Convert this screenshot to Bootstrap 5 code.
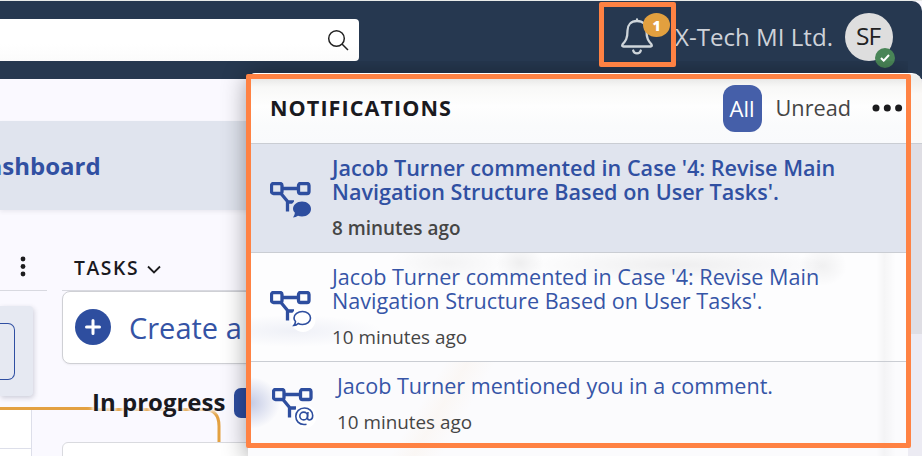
<!DOCTYPE html>
<html lang="en">
<head>
<meta charset="utf-8">
<meta name="viewport" content="width=device-width, initial-scale=1">
<title>Notifications</title>
<link href="https://cdn.jsdelivr.net/npm/bootstrap@5.3.0/dist/css/bootstrap.min.css" rel="stylesheet">
<style>
  body { font-family: "Open Sans", "Noto Sans", sans-serif; background: #faf9ff; color: #1a1a1f; height: 456px; white-space: nowrap; }
  svg { display: block; flex: none; }
  .app { height: 456px; border-top: 1px solid #e9ebe9; }
  .topbar { height: 78px; background: #263850; border-top-right-radius: 10px; padding: 0 29px 0 0; }
  .searchbox { width: 359px; height: 42px; background: linear-gradient(#fff 60%, #fbfbfb); border-radius: 0 4px 4px 0; padding: 0 10px; margin-top: -1px; }
  .company { font-size: 24.1px; color: #ced2d9; line-height: 34px; margin: -7px 12px 0 18px; }
  .bell { width: 38px; height: 48px; margin-top: -12px; }
  .count { left: 24px; top: 3px; width: 27px; height: 24px; background: #e2a03f; font-size: 14px; font-weight: 800; }
  .avatar-disc { width: 48px; height: 48px; background: #dedede; color: #222; font-size: 24.5px; letter-spacing: -1px; margin-top: -6px; padding: 0 2px 1px 0; }
  .online { left: 30px; top: 29px; width: 20px; height: 20px; background: #498557; }
  .band { height: 89px; margin-top: 42px; background: #e0e4ee; box-shadow: 0 2px 4px rgba(60,60,80,.08); }
  .band-title { font-size: 24px; font-weight: 700; color: #3150a2; margin-left: -30px; }
  .side { width: 47px; }
  .side-head { height: 81px; border-bottom: 1px solid #d8d9e0; padding: 46px 18px 0 0; }
  .side-card { width: 33px; height: 90px; margin-top: 15px; background: #e6e9f2; border-radius: 0 4px 4px 0; box-shadow: 1px 2px 5px rgba(50,55,80,.22); }
  .side-inner { width: 15px; height: 57px; border: 1px solid #2f4fa2; border-left: 0; border-radius: 0 7px 7px 0; }
  .orange-line { height: 3px; width: 96px; background: #e3a141; margin-top: 11px; }
  .side-table { width: 32px; height: 46px; background: #fff; border-right: 1px solid #dddfea; }
  .side-table div { height: 39px; border-bottom: 1px solid #dddfea; }
  .board { width: 400px; margin-left: 15px; }
  .board-head { height: 81px; border-bottom: 1px solid #d8d9e0; padding: 44px 0 0 12px; }
  .tasks-title { font-size: 19.3px; font-weight: 600; letter-spacing: 1.6px; line-height: 28px; }
  .create { height: 73px; background: #fff; border: 1px solid #cfd0d5; border-radius: 8px; padding-left: 12px; color: #3453a5; font-size: 29px; box-shadow: 0 1px 2px rgba(0,0,0,.05); }
  .create-label { margin-left: 18px; }
  .stage { height: 78px; }
  .stage-name { font-size: 24px; font-weight: 700; line-height: 30px; margin: 23px 0 0 30px; text-shadow: 0 0 4px #faf9ff, 0 0 4px #faf9ff, 0 0 6px #faf9ff, 0 0 3px #faf9ff; position: relative; }
  .stage-tag { width: 30px; height: 30px; background: #2d4da0; border-radius: 7px; margin: 24px 0 0 9px; }
  .curve { left: 33px; top: 44px; }
  .next-card { height: 30px; background: #fff; border: 1px solid #d9dadf; border-radius: 6px 6px 0 0; }
  .scroll-edge { left: 908px; top: 79px; width: 14px; height: 377px; background: linear-gradient(#dfdee4 255px, #ecebf3 255px); }
  .panel { left: 248px; top: 73px; width: 660px; height: 383px; background: #fdfdfe; border-radius: 8px 0 0 0; box-shadow: 0 2px 26px rgba(0,0,0,.42); clip-path: inset(-12px 0 0 -40px); }
  .panel-head { width: 660px; height: 71px; background: linear-gradient(#e9e9e8 5px, #f8f8f7 13px, #fefefe 32px, #fafbfc 52px, #f9fafc); border-top: 1px solid #fff; border-bottom: 1px solid #cacdd3; border-radius: 8px 0 0 0; padding: 0 5px 1px 22px; }
  .panel-corner { left: 908px; top: 73px; width: 14px; height: 71px; background: linear-gradient(#efeeec 5px, #faf8f6 20px, #faf9f8); border-top: 1px solid #fff; border-bottom: 1px solid #cacdd3; border-top-right-radius: 10px; }
  .panel-title { font-size: 21.6px; font-weight: 700; letter-spacing: 1.05px; }
  .tab-all { width: 39px; height: 47px; background: #455fa9; color: #fff; border-radius: 12px; font-size: 22px; }
  .tab-unread { font-size: 21.7px; color: #454545; margin: 0 21px 0 14px; }
  .note { border-bottom: 1px solid #cacdd3; height: 109px; padding: 12px 0 0 22px; }
  .note-new { background: #e0e4ee; }
  .note-old { background:
      radial-gradient(ellipse 90px 16px at 45px 78px, rgba(75,95,165,.08), transparent),
      radial-gradient(ellipse 24px 18px at 272px 10px, rgba(0,0,0,.06), transparent),
      radial-gradient(ellipse 60px 20px at 200px 10px, rgba(0,0,0,.04), transparent),
      radial-gradient(ellipse 150px 18px at 430px 12px, rgba(0,0,0,.06), transparent),
      radial-gradient(ellipse 24px 20px at 575px 13px, rgba(0,0,0,.05), transparent),
      linear-gradient(90deg, transparent 628px, rgba(0,0,0,.03) 636px, transparent 648px), #fdfdfe; }
  .note-last { height: 95px; border-bottom: 0; background:
      radial-gradient(ellipse 30px 26px at 2px 41px, rgba(50,75,165,.28), transparent),
      linear-gradient(120deg, transparent 170px, rgba(240,180,110,.06) 190px, transparent 215px),
      linear-gradient(90deg, transparent 628px, rgba(0,0,0,.03) 636px, transparent 648px), #fbfbfd; }
  .note-icon { width: 46px; margin: 26px 16px 0 0; }
  .note-last .note-icon { margin: 14px 19px 0 2px; }
  .note-text { font-size: 21.6px; line-height: 24px; color: #3655a7; }
  .note-time { font-size: 18.85px; line-height: 24px; color: #454545; margin-top: 12px; }
  .note-new .note-text { font-weight: 600; color: #3050a2; font-size: 21.6px; }
  .note-new .note-time { font-weight: 600; font-size: 18.9px; }
  .highlight { border: 5px solid #ff8243; border-radius: 2px; }
  .hl-bell { left: 599px; top: 2px; width: 77px; height: 65px; }
  .hl-panel { left: 246px; top: 74px; width: 665px; height: 374px; }
</style>
</head>
<body class="overflow-hidden">
<div class="app position-relative overflow-hidden">
  <header class="topbar d-flex align-items-center">
    <div class="searchbox d-flex align-items-center justify-content-end">
      <svg width="22" height="22" viewBox="0 0 22 22" fill="none" stroke="#222" stroke-width="1.5"><circle cx="9.5" cy="9.5" r="7.8"/><path d="M15 15l6 6"/></svg>
    </div>
    <div class="bell position-relative ms-auto">
      <svg width="38" height="48" viewBox="0 0 38 48" fill="none" stroke="#ced5da" stroke-width="2.300" stroke-linecap="round" stroke-linejoin="round"><path d="M18 11V9.500M18 11C12 11 8.500 15 8.500 20.500C8.500 29 6.500 31 3.500 34.500Q2.500 36.500 4.500 36.500H31.500Q33.500 36.500 32.500 34.500C29.500 31 27.500 29 27.500 20.500C27.500 15 24 11 18 11ZM14.200 40.500C15 44.200 21 44.200 21.800 40.500"/></svg>
      <span class="count position-absolute rounded-circle text-white d-flex align-items-center justify-content-center">1</span>
    </div>
    <div class="company">X-Tech MI Ltd.</div>
    <div class="position-relative">
      <div class="avatar-disc rounded-circle d-flex align-items-center justify-content-center">SF</div>
      <span class="online position-absolute rounded-circle d-flex align-items-center justify-content-center">
        <svg width="10" height="8" viewBox="0 0 10 8" fill="none" stroke="#fff" stroke-width="2"><path d="M1 4l2.700 2.700L9 1"/></svg>
      </span>
    </div>
  </header>

  <div class="band d-flex align-items-center"><span class="band-title">Dashboard</span></div>

  <main class="d-flex">
    <div class="side flex-shrink-0">
      <div class="side-head d-flex justify-content-end">
        <svg width="12" height="22" viewBox="0 0 12 22" fill="#1d1d1f"><circle cx="6" cy="3" r="2.400"/><circle cx="6" cy="10.500" r="2.400"/><circle cx="6" cy="18" r="2.400"/></svg>
      </div>
      <div class="side-card d-flex align-items-center"><div class="side-inner"></div></div>
      <div class="orange-line"></div>
      <div class="side-table"><div></div></div>
    </div>
    <div class="board flex-shrink-0">
      <div class="board-head d-flex align-items-start gap-2">
        <span class="tasks-title">TASKS</span>
        <svg width="14" height="28" viewBox="0 0 14 28" fill="none" stroke="#1d1d1f" stroke-width="1.800"><path d="M1 12.500l6 6 6-6"/></svg>
      </div>
      <div class="create d-flex align-items-center">
        <svg width="36" height="36" viewBox="0 0 36 36" overflow="visible"><circle cx="18" cy="17" r="18" fill="#2e4e9f"/><path d="M18 10.500v13M11.500 17h13" stroke="#fff" stroke-width="3" stroke-linecap="round"/></svg>
        <span class="create-label">Create a new task</span>
      </div>
      <div class="stage d-flex align-items-start position-relative">
        <svg class="curve position-absolute" width="128" height="34" viewBox="0 0 128 34" fill="none" stroke="#e3a141" stroke-width="3"><path d="M0 1.500H109Q124 1.500 124 18V34"/></svg>
        <div class="stage-name">In progress</div>
        <div class="stage-tag"></div>
      </div>
      <div class="next-card"></div>
    </div>
  </main>
</div>

<div class="scroll-edge position-absolute"></div>
<div class="panel-corner position-absolute"></div>
<section class="panel position-absolute">
  <div class="panel-head d-flex align-items-center">
    <span class="panel-title me-auto">NOTIFICATIONS</span>
    <span class="tab-all d-flex align-items-center justify-content-center">All</span>
    <span class="tab-unread">Unread</span>
    <svg width="31" height="8" viewBox="0 0 31 8" fill="#1b1b1d"><circle cx="4" cy="4" r="3.500"/><circle cx="15.300" cy="4" r="3.500"/><circle cx="26.600" cy="4" r="3.500"/></svg>
  </div>

  <article class="note note-new d-flex">
    <div class="note-icon">
      <svg width="46" height="42" viewBox="0 0 46 42" fill="none" stroke="#2e4e9f" stroke-width="3.300"><rect x="1.500" y="1.500" width="10.500" height="10" rx="2"/><rect x="28.500" y="1.500" width="10.500" height="10" rx="2"/><path d="M12 6.500H28.500M11 11.500L18 20M17.500 29.500V20H24" /><circle cx="32" cy="28" r="11.500" fill="#e0e4ee" stroke="none"/><path d="M32 19.500C37.200 19.500 41 22.700 41 27S37.200 34.500 32 34.500Q29.800 34.500 28 33.700Q25.800 35.500 23 35.500Q24.800 33 24.900 30.800Q23 29 23 27C23 22.700 27 19.500 32 19.500Z" fill="#2e4e9f" stroke="none"/></svg>
    </div>
    <div>
      <div class="note-text">Jacob Turner commented in Case '4: Revise Main<br>Navigation Structure Based on User Tasks'.</div>
      <div class="note-time">8 minutes ago</div>
    </div>
  </article>

  <article class="note note-old d-flex">
    <div class="note-icon">
      <svg width="46" height="42" viewBox="0 0 46 42" fill="none" stroke="#2e4e9f" stroke-width="3.300"><rect x="1.500" y="1.500" width="10.500" height="10" rx="2"/><rect x="28.500" y="1.500" width="10.500" height="10" rx="2"/><path d="M12 6.500H28.500M11 11.500L18 20M17.500 29.500V20H24"/><circle cx="33" cy="28.500" r="12.500" fill="#fff" stroke="none"/><path d="M32.500 20.500C37 20.500 40.500 23.300 40.500 27S37 33.500 32.500 33.500Q30 33.500 28.200 32.500Q26.300 34.500 23.800 34.500Q25.500 32.500 25.500 30.500Q24 29 24 27C24 23.300 28 20.500 32.500 20.500Z" stroke-width="1.600"/></svg>
    </div>
    <div>
      <div class="note-text">Jacob Turner commented in Case '4: Revise Main<br>Navigation Structure Based on User Tasks'.</div>
      <div class="note-time">10 minutes ago</div>
    </div>
  </article>

  <article class="note note-last d-flex">
    <div class="note-icon">
      <svg width="46" height="42" viewBox="0 0 46 42" fill="none" stroke="#2e4e9f" stroke-width="3.300"><rect x="1.500" y="1.500" width="10.500" height="10" rx="2"/><rect x="28.500" y="1.500" width="10.500" height="10" rx="2"/><path d="M12 6.500H28.500M11 11.500L18 20M17.500 29.500V20H24"/><circle cx="33" cy="28.500" r="11.500" fill="#fff" stroke="none"/><g stroke-width="1.600"><circle cx="31.700" cy="28" r="3.900"/><path d="M36 24L35.400 29.500Q35.500 32 37.500 32Q40.700 31.500 40.700 27.500C40.700 23 37 20 32.500 20C27.500 20 23.800 23.500 23.800 28.300C23.800 33 27 36.500 32 36.500Q33.500 36.500 34.500 36.200"/></g></svg>
    </div>
    <div>
      <div class="note-text">Jacob Turner mentioned you in a comment.</div>
      <div class="note-time">10 minutes ago</div>
    </div>
  </article>
</section>

<div class="highlight hl-bell position-absolute"></div>
<div class="highlight hl-panel position-absolute"></div>
<script src="https://cdn.jsdelivr.net/npm/bootstrap@5.3.0/dist/js/bootstrap.bundle.min.js"></script>
</body>
</html>
